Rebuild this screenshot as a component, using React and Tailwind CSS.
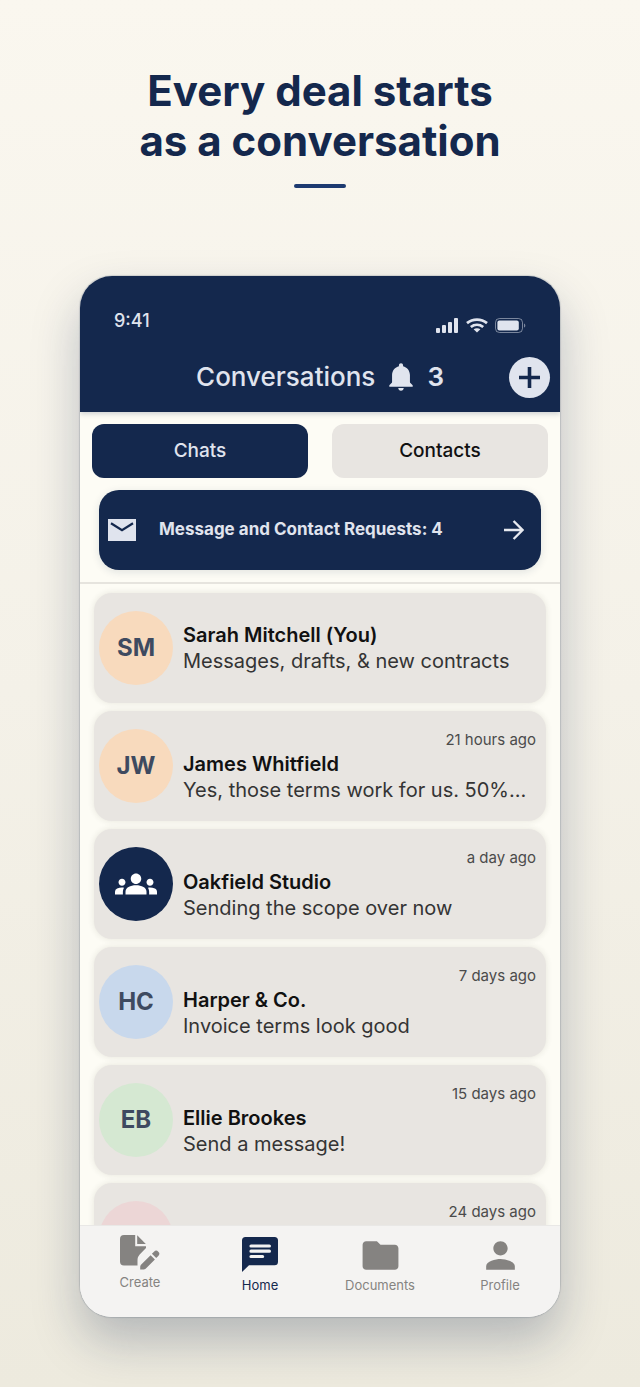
import clsx from "clsx";
import { IoMdNotifications } from "react-icons/io";
import { MdFolder, MdGroups, MdPerson } from "react-icons/md";

const chats = [
  { id: "sm", initials: "SM", name: "Sarah Mitchell (You)", message: "Messages, drafts, & new contracts", color: "bg-[#f8dabd]" },
  { id: "jw", initials: "JW", name: "James Whitfield", message: "Yes, those terms work for us. 50%…", time: "21 hours ago", color: "bg-[#f8dabd]" },
  { id: "os", group: true, name: "Oakfield Studio", message: "Sending the scope over now", time: "a day ago", color: "bg-[#14284d]" },
  { id: "hc", initials: "HC", name: "Harper & Co.", message: "Invoice terms look good", time: "7 days ago", color: "bg-[#c8d8ec]" },
  { id: "eb", initials: "EB", name: "Ellie Brookes", message: "Send a message!", time: "15 days ago", color: "bg-[#d5e8d2]" },
  { id: "rt", initials: "", name: "", message: "", time: "24 days ago", color: "bg-[#ecd6d6]" },
];

function SignalIcon() {
  return (
    <svg width="23" height="15" viewBox="0 0 23 15" fill="currentColor" aria-hidden="true">
      <rect x="0" y="10" width="4" height="5" rx="1" />
      <rect x="6" y="7" width="4" height="8" rx="1" />
      <rect x="12" y="4" width="4" height="11" rx="1" />
      <rect x="18" y="0" width="4" height="15" rx="1" />
    </svg>
  );
}

function WifiIcon() {
  return (
    <svg width="22" height="15" viewBox="0 0 22 15" fill="none" stroke="currentColor" strokeWidth="2.8" aria-hidden="true">
      <path d="M1 5.200C6.800.400 15.200.400 21 5.200" />
      <path d="M4.800 9c3.700-2.900 8.700-2.900 12.400 0" />
      <path d="M11 14.600 7.600 11.300c1.900-1.500 4.900-1.500 6.800 0z" fill="currentColor" stroke="none" />
    </svg>
  );
}

function BatteryIcon() {
  return (
    <svg width="31" height="15" viewBox="0 0 31 15" fill="none" aria-hidden="true">
      <rect x=".5" y=".5" width="27" height="14" rx="4" stroke="currentColor" opacity=".5" />
      <rect x="2.4" y="2.4" width="21.4" height="10.2" rx="2" fill="currentColor" />
      <path d="M29 5.400c1.800.600 1.800 3.600 0 4.200z" fill="currentColor" opacity=".5" />
    </svg>
  );
}

function MailIcon() {
  return (
    <svg width="28" height="22" viewBox="0 0 28 22" aria-hidden="true">
      <path d="M0 0h28v22H0z" fill="#e0e4ee" />
      <path d="m3 4.200 11 7 11-7" fill="none" stroke="#14284d" strokeWidth="2.2" />
    </svg>
  );
}

function ArrowIcon() {
  return (
    <svg width="20" height="20" viewBox="0 0 20 20" fill="none" stroke="#e8eaf0" strokeWidth="2.4" aria-hidden="true">
      <path d="M0 10h18M9.600 1l9 9-9 9" />
    </svg>
  );
}

function CreateIcon() {
  return (
    <svg width="40" height="36" viewBox="0 0 40 36" fill="currentColor" aria-hidden="true">
      <path d="M4 0h11.200v11.200H26v1.800l-6.300 6.600c-1.700 1.800-2.200 3.800-2.200 5.800v5.200H4a4 4 0 0 1-4-4V4a4 4 0 0 1 4-4z" />
      <path d="M17.200.300 25.800 8.900h-8.600z" />
      <path d="M20.200 34.600v-2.400c0-1.400.500-2.200 1.300-3l9.100-9 4.300 4.300-9 9c-.9.800-1.600 1.100-2.900 1.100z" />
      <path d="m31.900 18.800 2.100-2.100a3 3 0 0 1 4.300 0 3 3 0 0 1 0 4.300l-2.100 2.100z" />
    </svg>
  );
}

function ChatIcon() {
  return (
    <svg width="36" height="36" viewBox="0 0 36 36" aria-hidden="true">
      <path d="M3.500 0h29A3.500 3.500 0 0 1 36 3.500v21.200a3.500 3.500 0 0 1-3.500 3.500H7L0 35V3.500A3.500 3.500 0 0 1 3.500 0z" fill="currentColor" />
      <path d="M9 9h18.400M9 14.200h18.400M9 19.500h11.600" stroke="#f4f3f2" strokeWidth="3.2" strokeLinecap="round" />
    </svg>
  );
}

const navItems = [
  { label: "Create", icon: <CreateIcon />, compact: true },
  { label: "Home", icon: <ChatIcon />, active: true },
  { label: "Documents", icon: <MdFolder size={43} /> },
  { label: "Profile", icon: <MdPerson size={43} /> },
];

function PhoneHeader() {
  return (
    <header className="relative z-10 bg-[#14284d] text-[#e0e4ee] shadow-[0_2px_5px_rgba(20,40,77,0.2)] pt-8 pb-3">
      <div className="flex items-start justify-between px-[34px]">
        <span className="text-[18px] leading-[26px] font-medium">9:41</span>
        <div className="flex items-center gap-[7px] pt-[10px]">
          <SignalIcon />
          <WifiIcon />
          <BatteryIcon />
        </div>
      </div>
      <div className="grid grid-cols-[1fr_auto_1fr] items-center pt-5 px-[10px]">
        <h2 className="col-start-2 flex items-center text-[26px] leading-[46px] font-medium">
          Conversations
          <IoMdNotifications className="mx-[9px]" size={34} aria-hidden="true" />
          <span className="font-semibold">3</span>
        </h2>
        <button aria-label="New conversation" className="justify-self-end grid place-items-center size-[41px] rounded-full bg-[#e0e4ee]">
          <svg width="21" height="21" viewBox="0 0 21 21" stroke="#14284d" strokeWidth="3.6" aria-hidden="true">
            <path d="M10.500 0v21M0 10.500h21" />
          </svg>
        </button>
      </div>
    </header>
  );
}

function ChatCard({ chat }) {
  return (
    <li>
      <button className="flex w-full h-[110px] items-center gap-[10px] rounded-[18px] bg-[#e8e5e1] pl-[5px] pr-[10px] text-left shadow-[0_0_6px_rgba(60,55,40,0.12)]">
        <span className={clsx("grid place-items-center size-[74px] shrink-0 rounded-full text-[24px] font-bold text-[#3e4a60]", chat.color)}>
          {chat.group ? <MdGroups size={42} className="text-white" aria-hidden="true" /> : chat.initials}
        </span>
        <span className="flex flex-col min-w-0 flex-1 h-[74px] justify-center">
          {chat.time && <span className="self-end text-[15px] leading-[22px] text-[#4b4b4b]">{chat.time}</span>}
          <span className="block min-h-[26px] truncate text-[20px] leading-[26px] font-semibold text-[#111111]">{chat.name}</span>
          <span className="block min-h-[26px] truncate text-[20px] leading-[26px] text-[#343434]">{chat.message}</span>
        </span>
      </button>
    </li>
  );
}

function BottomNav() {
  return (
    <nav className="relative z-10 grid grid-cols-4 h-[92px] shrink-0 border-t border-[#e9e8e6] bg-[#f4f3f2]">
      {navItems.map((item) => (
        <a
          key={item.label}
          href="#"
          className={clsx("flex flex-col items-center pt-2 text-[13px] leading-5", item.active ? "text-[#14284d]" : "text-[#858381]")}
        >
          <span className={clsx("grid place-items-center", item.compact ? "h-[38px]" : "h-[41px]")}>{item.icon}</span>
          {item.label}
        </a>
      ))}
    </nav>
  );
}

export default function App() {
  return (
    <main className="flex flex-col h-screen min-h-[900px] overflow-hidden bg-linear-to-b from-[#faf7ef] via-[#f4f1e8] to-[#edeade] px-20 pb-[70px] font-['Inter',sans-serif]">
      <div className="h-[276px] shrink-0 pt-[66px] text-center">
        <h1 className="text-[42px] leading-[50px] font-bold text-[#14284d]">
          Every deal starts
          <br />
          as a conversation
        </h1>
        <div className="mx-auto mt-[18px] h-1 w-[52px] rounded-full bg-[#1d3a70]" />
      </div>

      <section className="flex flex-col flex-1 min-h-0 overflow-hidden rounded-[32px] bg-[#fdfcf5] shadow-[0_0_1px_1px_rgba(20,40,77,0.15),0_24px_48px_rgba(20,40,77,0.26)]">
        <PhoneHeader />

        <div className="border-b-2 border-[#e6e4de] px-3 pt-3 pb-3">
          <div className="grid grid-cols-2 gap-6 text-[19px] font-medium">
            <button className="h-[54px] rounded-xl bg-[#14284d] text-[#e0e4ee]">Chats</button>
            <button className="h-[54px] rounded-xl bg-[#e8e5e1] text-[#111111]">Contacts</button>
          </div>
          <button className="mt-3 mx-[7px] flex h-20 w-[calc(100%-14px)] items-center rounded-[20px] bg-[#14284d] pl-[9px] pr-[17px] text-[#e0e4ee] shadow-[0_2px_8px_rgba(20,40,77,0.12)]">
            <MailIcon />
            <span className="ml-[23px] flex-1 text-left text-[17px] font-bold">Message and Contact Requests: 4</span>
            <ArrowIcon />
          </button>
        </div>

        <ul className="flex flex-1 min-h-0 flex-col gap-2 overflow-hidden px-[14px] pt-[9px]">
          {chats.map((chat) => (
            <ChatCard key={chat.id} chat={chat} />
          ))}
        </ul>

        <BottomNav />
      </section>
    </main>
  );
}
